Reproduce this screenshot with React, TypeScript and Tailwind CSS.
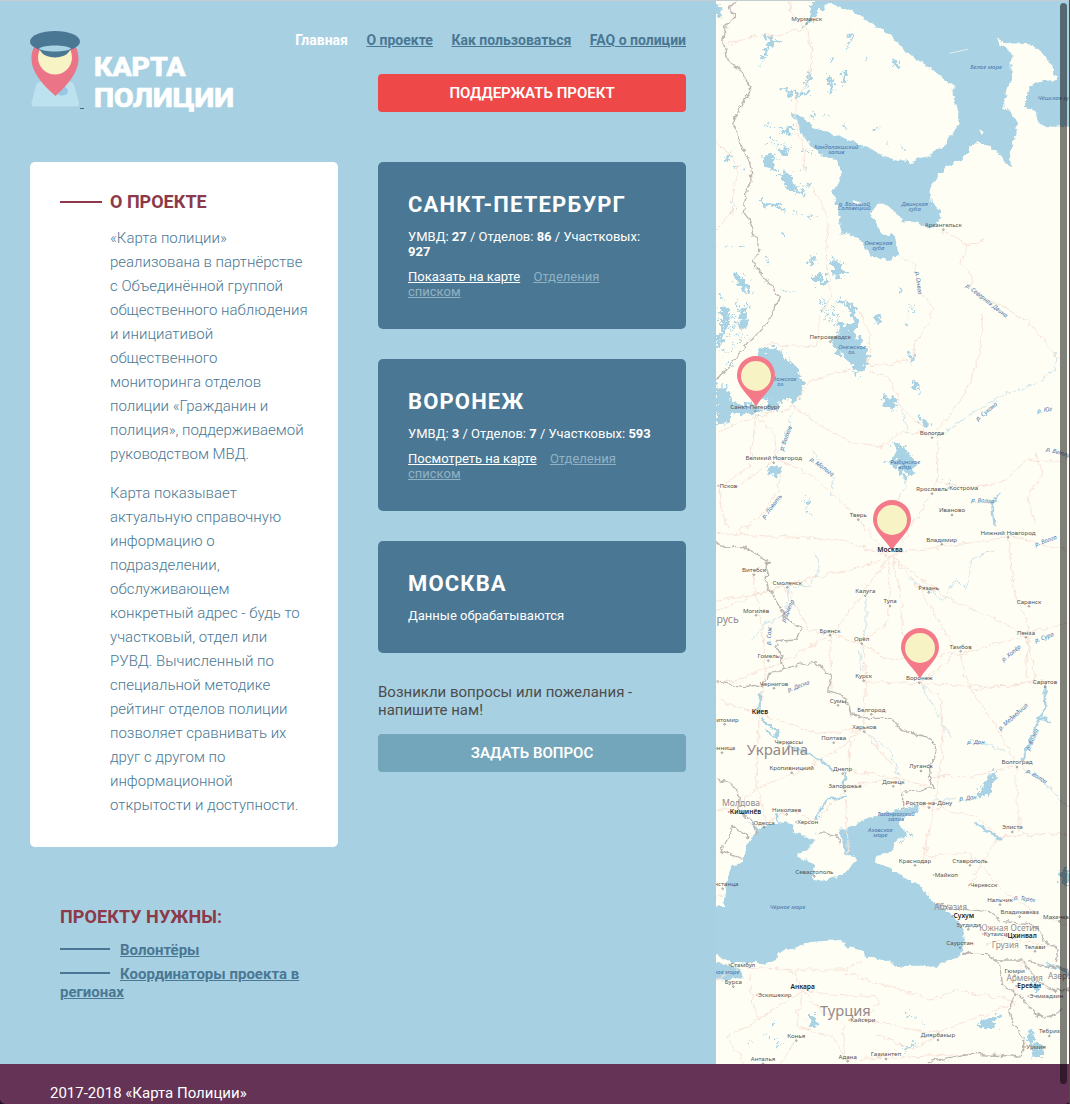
import React from "react";

const WATER = "#a9d3e4";

type Label = [string, number, number, number?, number?];

/* Map labels: text, centre x, baseline y, font size, rotation */
const cities: Label[] = [
  ["Мурманск", 272, 63], ["Архангельск", 682, 681], ["Петрозаводск", 343, 1017], ["Санкт-Петербург", 118, 1226],
  ["Вологда", 648, 1305], ["Великий Новгород", 173, 1380], ["◦Псков", 34, 1464], ["Ярославль", 648, 1473],
  ["◦Кострома", 740, 1469], ["Тверь", 427, 1551], ["Иваново", 708, 1537], ["Владимир", 677, 1625],
  ["Нижний Новгород", 876, 1604], ["Витебск", 114, 1716], ["Смоленск", 214, 1754], ["Калуга", 448, 1779],
  ["Рязань", 638, 1769], ["Тула", 522, 1810], ["Саранск", 939, 1811], ["Могилёв", 120, 1838],
  ["Брянск", 342, 1898], ["Орёл", 437, 1923], ["Тамбов", 734, 1946], ["Пенза", 930, 1904],
  ["Гомель", 157, 1974], ["Чернигов", 174, 2057], ["Курск", 443, 2034], ["Воронеж", 610, 2040],
  ["Саратов", 987, 2053], ["Сумы", 366, 2108], ["Белгород", 466, 2135], ["Житомир", 26, 2165],
  ["Харьков", 445, 2187], ["Полтава", 353, 2220], ["Черкассы", 218, 2232], ["Винница", 18, 2250],
  ["Кропивницкий", 227, 2310], ["Днепр", 380, 2313], ["Луганск", 615, 2305], ["Волгоград", 903, 2293],
  ["Донецк", 532, 2351], ["Запорожье", 387, 2365], ["Николаев", 212, 2435], ["Ростов-на-Дону", 639, 2415],
  ["Одесса", 144, 2474], ["◦Херсон", 272, 2473], ["Элиста", 889, 2488], ["Краснодар", 597, 2588],
  ["Ставрополь", 762, 2588], ["Севастополь", 295, 2621], ["Констанца", 20, 2658], ["◦Майкоп", 688, 2632],
  ["◦Черкесск", 800, 2662], ["Нальчик", 852, 2706], ["Владикавказ", 911, 2742], ["Махачкала", 1030, 2756],
  ["Зугдиди", 757, 2780], ["◦Кутаиси", 836, 2808], ["Саурстан", 732, 2835], ["Телави", 957, 2846],
  ["◦Стамбул", 77, 2902], ["Бурса", 52, 2952], ["Гюмри", 896, 2919], ["◦Эскишехир", 173, 2991],
  ["◦Эчмиадзин", 988, 2993], ["◦Кайсери", 437, 3067], ["Диярбакыр", 666, 3112], ["Конья", 241, 3114],
  ["Тебриз", 1000, 3100], ["◦Урмия", 957, 3148], ["Адана", 395, 3176], ["Газиантеп", 510, 3169],
  ["Анталья", 141, 3183],
];

const capitals: Label[] = [
  ["Москва", 522, 1657], ["Киев", 132, 2142], ["◦Кишинёв", 85, 2442], ["◦Сухум", 740, 2754],
  ["◦Цхинвал", 915, 2815], ["Анкара", 260, 2966], ["◦Ереван", 936, 2963],
];

const countries: Label[] = [
  ["русь", 35, 1870, 32], ["Украина", 184, 2264, 45], ["Молдова", 75, 2418, 26], ["Абхазия", 704, 2731, 25],
  ["Южная Осетия", 880, 2792, 25], ["Грузия", 868, 2843, 25], ["Армения", 926, 2943, 25], ["Азерб", 1032, 2938, 25],
  ["Турция", 388, 3047, 44],
];

const waters: Label[] = [
  ["Белое море", 810, 207], ["Чёшская губа", 1022, 300], ["Кандалакшский", 361, 446], ["залив", 361, 461],
  ["о. Большой", 415, 617], ["Соловецкий", 415, 631], ["Двинская", 596, 618], ["губа", 596, 633],
  ["Онежская", 487, 736], ["губа", 487, 750], ["Онежское", 408, 1048], ["оз.", 408, 1061],
  ["Ладожское", 195, 1142], ["оз.", 195, 1157], ["Рыбинское", 568, 1392], ["вдхр.", 568, 1406],
  ["Таганрогский", 540, 2449], ["залив", 540, 2463], ["Азовское", 493, 2496], ["море", 493, 2511],
  ["Чёрное море", 215, 2726], ["ное море", 32, 2921], ["р. Онега", 607, 854, 18, 83],
  ["р. Северная Двина", 812, 908, 18, 38], ["р. Сухона", 812, 1240, 18, -39], ["р. Юг", 986, 1236, 18, -8],
  ["р. Волхов", 210, 1320, 18, -70], ["р. Молога", 318, 1406, 18, 36], ["р. Ловать", 168, 1525, 18, -52],
  ["р. Волга", 800, 1508, 18, 3], ["р. Ветлуга", 1035, 1365, 18, 16], ["р. Волга", 990, 1628, 18, -20],
  ["р. Днепр", 216, 1838, 18, -66], ["р. Сож", 160, 1912, 18, -85], ["р. Сура", 985, 1918, 18, -20],
  ["р. Хопёр", 886, 1965, 18, -38], ["р. Десна", 248, 2064, 18, -20], ["р. Медведица", 892, 2156, 18, -42],
  ["р. Дон", 780, 2232, 18], ["р. Волга", 950, 2224, 18, -66], ["р. Волга", 962, 2335, 18, 32],
  ["р. Дон", 756, 2400, 18, -5], ["р. Терек", 926, 2702, 18, 8],
];

const roads = [
  "M30 135L110 108L200 104L270 82L290 150L280 230L240 300L240 370L262 440L268 520",
  "M270 82L225 40L220 0", "M0 425L40 460L62 500L55 570L48 640L0 690",
  "M270 545L325 615L336 680L330 790L350 880L310 950L298 1040L230 1038L130 1030",
  "M682 690L752 735L800 720M752 735L735 790L768 830L768 870L930 960L1030 1080",
  "M550 765L600 800L612 880L650 920L645 960L600 1020L590 1080L460 1100L460 1000L430 930",
  "M460 1115L520 1130L555 1220L640 1305L665 1300L665 1440L600 1560L530 1670",
  "M665 1290L750 1180L790 1060L800 950", "M120 1250L235 1220L310 1275L400 1325L500 1340L550 1300L640 1295",
  "M120 1250L180 1310L175 1370L290 1430L370 1500L420 1550L520 1670",
  "M120 1250L100 1400L30 1450L0 1460M10 1465L20 1540L35 1590", "M0 1300L120 1245M235 1210L290 1140L410 1105",
  "M170 1385L60 1460M190 1420L190 1470L130 1550L60 1600",
  "M0 1600L200 1610L380 1620L520 1670L400 1710L210 1750L0 1835", "M210 1755L110 1790L0 1800M110 1720L130 1840L150 1970L130 2140",
  "M520 1670L570 1655L820 1620L880 1610L1060 1650", "M665 1450L800 1460L870 1440L930 1380L1060 1385M960 1350L980 1420L935 1490L960 1570",
  "M522 1670L518 1860L440 1925L450 2040L440 2190L400 2210L400 2300L385 2350L398 2560",
  "M530 1670L555 1800L560 1900L610 2050L670 2090L685 2200L660 2390L640 2500L620 2590",
  "M535 1675L620 1780L720 1950L690 1990L610 2050M540 1680L690 1790L820 1850L920 1900L1060 1870",
  "M515 1680L440 1780L350 1900L190 1990L60 2040L0 2050", "M210 1760L280 1890L340 1900L345 2070",
  "M350 1900L430 1930L520 1980L610 1970L740 1960L840 1930L930 1910L960 2040L860 2060L440 2045",
  "M880 1610L890 1750L940 1890L930 2030M730 1960L760 2060L840 2180L900 2290L910 2490",
  "M770 2070L980 2045M0 2095L130 2145L250 2180L300 2200L440 2190", "M130 2145L120 2350L150 2470L220 2430L300 2465L385 2365L550 2330L560 2410L640 2420",
  "M440 2195L380 2240L240 2320L130 2360L60 2420L0 2430M400 2310L520 2330L640 2360M560 2330L440 2190",
  "M650 2330L770 2330L900 2295M640 2420L780 2450L850 2510L1060 2500M850 2510L800 2580L760 2660",
  "M640 2480L620 2570L760 2560L870 2680L1000 2760L1060 2780",
  "M0 2690L25 2685M0 2940L80 2900L230 2910L390 2910L440 2880",
  "M100 2920L110 3010L130 3060L30 3110L90 3190M130 3060L260 2970L290 3010L380 3070L390 3170",
  "M230 2910L260 2970L340 2985L480 2990L490 3010L440 3060L500 3070L650 3100L760 3060L900 3010",
  "M390 2920L650 3000L720 2970L890 3000M260 2980L240 3080L350 3110L390 3180L600 3170L800 3160",
  "M480 3100L590 3150L660 3110M240 3110L200 3190M890 3010L920 2880M810 2840L870 2810L900 2820L1000 2840",
];

const borders = [
  "M60 0L40 20L55 50L30 75L20 120L35 190L65 200L105 262L80 310L50 370L75 430L105 500L108 550L90 570L85 640L105 670L115 710L132 750L108 785L190 890L160 960L90 1040L0 1140",
  "M0 1625L30 1640L80 1640L120 1665L155 1680L150 1750L180 1800L205 1850L255 1885L240 1920L180 1925L190 1960L205 2005L160 2020L135 2055L80 2060L0 2045",
  "M205 2005L300 1985L345 2030L335 2075L390 2090L405 2145L460 2155L520 2155L560 2190L650 2220L660 2260L640 2305L650 2365L560 2375L560 2425",
  "M0 2335L50 2350L70 2390L65 2430L100 2455L125 2500M95 2510L50 2480L15 2555L80 2575",
  "M715 2725L820 2735L860 2765L930 2770L970 2785L980 2820L1030 2850L1020 2880",
  "M740 2860L810 2860L850 2890L860 2955L900 2980L880 3015L890 3070L920 3110L920 3170L890 3165L760 3160L640 3185",
  "M840 2880L920 2880L950 2930L1010 2975L1060 2970M905 2980L960 3045L1000 3050L1040 3030M935 2885L1060 2910",
  "M300 2500L360 2505L370 2530M660 2710L720 2725",
];

const rivers = [
  "M1018 1060L1018 1110L960 1150L870 1180L770 1240L665 1310", "M555 1220L575 1300M560 1420L570 1460L540 1500",
  "M235 1220L205 1320L175 1380M120 2480L90 2470M290 1350L350 1440L350 1490", "M450 1780L450 1880L430 1950L440 2010",
  "M300 1660L310 1710L280 1760L220 1760L210 1840L150 1870L110 1920", "M580 1740L620 1760L680 1800L720 1740L750 1770L770 1680L830 1650",
  "M450 2200L520 2250L550 2320", "M760 2220L860 2250M620 2060L670 2150L700 2210", "M650 2400L740 2395",
  "M925 2310L980 2340L1030 2400L1062 2420",
];

const wideRivers = [
  "M132 2080L130 2135", "M140 2160L180 2190L185 2212L150 2190", "M215 2235L300 2270L350 2310M390 2320L385 2360",
  "M300 2455L328 2400L390 2390", "M850 1480L828 1512L835 1575", "M985 2055L988 2130L970 2155L1005 2166M970 2160L915 2280",
  "M780 2470L850 2515", "M990 2890L1062 2920", "M180 2440L190 2470L230 2475M105 2460L130 2500",
];

const lakes = [
  "M290 0L335 0L325 15L296 55L255 90L280 45Z",
  "M145 112L175 115L200 120L180 130L160 150L125 205L155 135Z", "M405 90L412 100L400 140L390 160L398 120Z",
  "M335 230L350 232L356 270L345 282Z", "M385 212L394 222L388 255L380 245Z", "M275 220L288 206L280 260L268 263Z",
  "M195 260L230 275L285 275L280 288L250 285L225 298L215 285Z", "M530 180L552 188L550 205L530 200Z",
  "M465 390L485 384L480 394Z", "M0 10L22 15L15 50L0 60Z", "M150 460L170 465L178 512L150 500L138 485Z",
  "M190 385L230 380L226 403L200 400Z", "M200 445L216 450L212 470L195 460Z", "M20 480L50 450L35 490Z",
  "M185 515L225 520L232 555L270 580L230 575L210 560Z", "M122 605L190 608L212 642L180 620L150 620Z",
  "M340 775L378 790L380 810L405 825L360 830L345 800Z", "M290 825L325 825L330 850L295 853Z",
  "M50 820L90 835L105 870L90 880L70 860Z", "M280 770L300 765L295 790L275 795Z", "M15 920L40 930L35 990L15 1020Z",
  "M0 1000L20 1000L10 1040L0 1050Z",
  "M75 930L95 910L90 980L68 1000Z",
  "M355 895L410 915L426 955L420 1000L460 1070L440 1115L425 1125L400 1090L355 1050L345 1010L375 1000L365 960L385 970L395 985L410 960L395 930Z",
  "M480 943L495 950L490 975L478 970Z", "M580 1063L595 1055L590 1095L582 1090Z", "M590 1143L607 1145L608 1180L595 1165Z",
  "M500 1190L525 1188L545 1196L543 1224L515 1228L500 1212Z",
  "M605 1245L640 1275L635 1285L610 1262Z", "M528 1325L565 1345L600 1390L595 1420L565 1430L540 1400L510 1385L540 1370Z",
  "M155 1402L175 1395L200 1405L180 1430L160 1425Z",
  "M120 1060L150 1040L195 1052L215 1080L245 1105L262 1150L255 1185L235 1210L225 1198L195 1200L190 1235L150 1232L155 1195L120 1190Z",
  "M0 1155L30 1160L50 1210L120 1215L145 1240L50 1240L35 1265L0 1280Z",
  "M775 2390L800 2360L820 2325L845 2310L825 2375L790 2395Z",
  "M275 3050L300 3045L305 3080L285 3075Z", "M785 3065L850 3040L835 3085L800 3085Z", "M560 3145L600 3125L575 3155Z",
  "M148 3095L157 3110L150 3120ZM180 3115L195 3135L185 3140ZM165 3070L188 3075L170 3080Z",
  "M935 3095L960 3100L955 3130L985 3145L975 3175L950 3170L945 3130L930 3120Z",
  "M940 2945L980 2950L975 2970L950 2965Z",
  "M1062 2605L1025 2615L1030 2640L1062 2660Z",
];

function Labels({ items, className, size }: { items: Label[]; className: string; size: number }) {
  return (
    <g className={className} textAnchor="middle">
      {items.map(([text, x, y, s, r], i) => (
        <text key={i} x={x} y={y} fontSize={s ?? size} transform={r ? `rotate(${r} ${x} ${y - 5})` : undefined}>
          {text}
        </text>
      ))}
    </g>
  );
}

function Pin({ x, y }: { x: number; y: number }) {
  return (
    <g transform={`translate(${x} ${y})`}>
      <path d="M0 153C-12 124-57 96-57 57A57 57 0 0 1 57 57C57 96 12 124 0 153Z" fill="#f47a8a" />
      <circle cy="60" r="45" fill="#f8f3c5" />
    </g>
  );
}

function MapView() {
  return (
    <svg className="block h-[1064px] w-[354px] bg-[#fffef4]" viewBox="0 0 1062 3192" fontFamily="'Noto Sans', sans-serif">
      <defs>
        {/* Roughens coastlines, rivers and borders */}
        <filter id="coast" filterUnits="userSpaceOnUse" x="-40" y="-40" width="1142" height="3272">
          <feTurbulence type="fractalNoise" baseFrequency="0.045" numOctaves="3" seed="4" />
          <feDisplacementMap in="SourceGraphic" scale="22" xChannelSelector="R" yChannelSelector="G" />
        </filter>
        <filter id="lake" filterUnits="userSpaceOnUse" x="-40" y="-40" width="1142" height="3272">
          <feTurbulence type="fractalNoise" baseFrequency="0.07" numOctaves="3" seed="9" />
          <feDisplacementMap in="SourceGraphic" scale="42" xChannelSelector="R" yChannelSelector="G" />
        </filter>
      </defs>
      <g fill={WATER} filter="url(#coast)">
        <path d="M300 18L340 -30L1092 -30L1092 374L990 382L965 365L960 335L930 318L930 280L950 250L1023 238L1010 195L965 145L935 132L875 130L834 113L886 160L888 230L865 300L865 328L890 340L903 375L895 420L880 470L882 505L850 465L825 438L800 435L778 423L735 480L690 500L655 543L640 570L645 610L668 630L677 655L640 685L590 662L555 665L545 645L500 608L480 608L462 640L480 670L500 705L540 705L550 762L515 780L460 765L430 715L375 700L370 640L350 580L365 545L378 520L360 480L310 465L275 425L225 340L255 345L300 390L340 395L350 415L375 412L480 455L530 480L580 487L640 470L690 430L725 380L728 325L715 310L712 260L645 205L575 165L530 110L460 65L410 35L345 15Z" />
        <path d="M-30 2850L40 2885L150 2890L180 2875L200 2855L290 2825L375 2820L400 2845L440 2850L450 2878L480 2873L560 2900L660 2900L735 2865L750 2820L745 2790L712 2750L650 2700L600 2650L520 2605L475 2580L475 2545L430 2548L385 2560L425 2580L380 2625L320 2642L290 2635L300 2600L242 2565L275 2545L300 2520L235 2500L230 2475L145 2475L100 2520L85 2565L82 2585L45 2600L30 2650L22 2720L-30 2725Z" />
        <path d="M375 2515L370 2490L415 2475L500 2440L540 2430L610 2415L610 2430L580 2445L545 2465L560 2490L575 2510L545 2515L520 2560L460 2570L390 2560Z" />
        <path d="M-30 2890L60 2895L85 2935L-30 2940Z" />
      </g>
      <g fill={WATER} filter="url(#lake)">
        {lakes.map((d, i) => <path key={i} d={d} />)}
        <path fill="none" stroke={WATER} strokeWidth="5" strokeDasharray="14 12 6 18" d="M150 370L210 390L160 430L230 440L150 480M50 500L95 505M190 695L215 700M20 740L90 735M150 775L160 790M200 870L240 885M310 900L330 960M350 910L370 970M315 905L375 1000M325 900L385 990M0 930L80 960L20 1000L90 1010L0 1080M10 880L60 990M60 910L100 1000M340 180L355 182M450 175L448 181M290 340L300 350M325 340L335 360M385 370L393 388M510 420L515 440M555 440L565 445M550 865L560 875M590 920L560 990M40 640L60 600M50 1090L10 1110M250 1510L280 1490L270 1540L300 1550M570 3040L630 3070M690 1450L705 1445M95 3125L110 3120M570 2505L590 2500L555 2530M260 450L300 460M265 500L290 530M220 550L290 560M230 640L300 650" />
      </g>
      <path d="M700 160L755 148" stroke="#dfeef0" strokeWidth="3" fill="none" />
      <path d="M790 388L803 396L797 405ZM410 600L440 610L415 616Z" fill="#fffef4" />
      <g fill="none" strokeLinejoin="round" strokeLinecap="round" filter="url(#coast)">
        <g stroke="#f7e2d9" strokeWidth="3">{roads.map((d, i) => <path key={i} d={d} />)}</g>
        <g stroke="#cfe4ec" strokeWidth="3">{rivers.map((d, i) => <path key={i} d={d} />)}</g>
        <g stroke={WATER} strokeWidth="7">{wideRivers.map((d, i) => <path key={i} d={d} />)}</g>
        <g stroke="#bcb5b2" strokeWidth="4">{borders.map((d, i) => <path key={i} d={d} />)}</g>
      </g>
      <g fill="none" stroke="#777" strokeWidth="2">
        {cities.filter(([t]) => t[0] !== "◦").map(([t, x, y]) => <circle key={t} cx={x} cy={y + 8} r="2.5" />)}
      </g>
      <Labels items={waters} size={18} className="fill-[#4a74ad] italic" />
      <Labels items={cities} size={18.5} className="fill-[#555555]" />
      <Labels items={countries} size={25} className="fill-[#938a8b]" />
      <Pin x={120} y={1068} />
      <Pin x={528} y={1500} />
      <Pin x={612} y={1884} />
      <Labels items={capitals} size={20} className="fill-[#222222] font-semibold" />
    </svg>
  );
}

function Logo() {
  return (
    <svg width="210" height="84" viewBox="0 0 210 84" aria-label="Карта полиции">
      <path d="M9 52H41Q43 52 44 55L49 73Q49.500 76.500 46 76.500H4.500Q1 76.500 1.500 73L6 56Q7 52 9 52Z" fill="#bce2f0" />
      <ellipse cx="32" cy="61" rx="6" ry="4.500" fill="#95c8e4" />
      <path d="M25.500 66C19 60 1.500 45 1.500 29C1.500 12 13 8 25 8S48.500 12 48.500 29C48.500 45 32 60 25.500 66Z" fill="#eb7487" />
      <circle cx="25" cy="27.500" r="17" fill="#f8f3c5" />
      <path d="M9 17H41C39 31 11 31 9 17Z" fill="#4a7793" />
      <ellipse cx="25" cy="11.500" rx="25" ry="10.500" fill="#4a7793" />
      <path d="M9 18.500C13 14.500 37 14.500 41 18.500C38 22.500 12 22.500 9 18.500Z" fill="#a9d3e4" />
      <path d="M50 78.500H54" stroke="#4a6577" strokeWidth="1" />
      <g className="fill-white stroke-white font-extrabold" strokeWidth="0.7" fontFamily="Roboto, sans-serif" fontSize="25.500">
        <text x="64" y="46" textLength="91.500" lengthAdjust="spacingAndGlyphs">КАРТА</text>
        <text x="64" y="77" textLength="140" lengthAdjust="spacingAndGlyphs">ПОЛИЦИИ</text>
      </g>
    </svg>
  );
}

function CityCard({ name, height, children }: { name: string; height: string; children: React.ReactNode }) {
  return (
    <section className={`mb-[30px] rounded-[5px] bg-[#4a7793] px-[30px] pt-[30px] text-[13px] leading-[15px] text-white ${height}`}>
      <h2 className="mb-[12px] text-[22px] leading-[25px] font-bold tracking-[1.150px] whitespace-nowrap">{name}</h2>
      {children}
    </section>
  );
}

function CityLinks({ first }: { first: string }) {
  return (
    <p className="mt-[10px]">
      <a href="#" className="mr-[10px] underline">{first}</a>{" "}
      <a href="#" className="text-[#91b2c5] underline">Отделения<br />списком</a>
    </p>
  );
}

export default function App() {
  return (
    <div className="relative h-[1104px] w-[1070px] overflow-hidden bg-[#a7d1e2] font-[Roboto,sans-serif]">
      <div className="flex h-[1064px]">
        <div className="w-[716px] px-[30px]">
          <header className="flex h-[162px] justify-between pt-[30px]">
            <Logo />
            <div className="flex flex-col items-end">
              <nav className="flex h-[44px] gap-[18.500px] pt-[2px] text-[14px] leading-[17px] font-bold whitespace-nowrap text-[#4a7793]">
                <a href="#" className="text-white">Главная</a>
                <a href="#" className="underline">О проекте</a>
                <a href="#" className="underline">Как пользоваться</a>
                <a href="#" className="underline">FAQ о полиции</a>
              </nav>
              <a href="#" className="flex h-[38px] w-[308px] items-center justify-center rounded-[4px] bg-[#ee4848] text-[15px] font-semibold text-white">
                ПОДДЕРЖАТЬ ПРОЕКТ
              </a>
            </div>
          </header>
          <div className="flex gap-[40px]">
            <div className="w-[308px]">
              <section className="h-[685px] rounded-[5px] bg-white px-[30px] pt-[29px] text-[#4a7793]">
                <div className="mb-[14px] flex items-center gap-[8px]">
                  <span className="h-[2px] w-[42px] bg-[#8c3949]" />
                  <h2 className="text-[18px] leading-[21px] font-bold text-[#8c3949]">О ПРОЕКТЕ</h2>
                </div>
                <div className="-mr-[10px] flex flex-col gap-[15px] pl-[50px] text-[15px] leading-[24px] font-light">
                  <p>«Карта полиции»<br />реализована в партнёрстве<br />с Объединённой группой<br />общественного наблюдения<br />и инициативой<br />общественного<br />мониторинга отделов<br />полиции «Гражданин и<br />полиция», поддерживаемой<br />руководством МВД.</p>
                  <p>Карта показывает<br />актуальную справочную<br />информацию о<br />подразделении,<br />обслуживающем<br />конкретный адрес - будь то<br />участковый, отдел или<br />РУВД. Вычисленный по<br />специальной методике<br />рейтинг отделов полиции<br />позволяет сравнивать их<br />друг с другом по<br />информационной<br />открытости и доступности.</p>
                </div>
              </section>
              <section className="mt-[59px] px-[30px] text-[15px] leading-[18px] font-bold text-[#4a7793]">
                <h2 className="mb-[14px] text-[18px] leading-[21px] tracking-[0.080px] text-[#8c3949]">ПРОЕКТУ НУЖНЫ:</h2>
                <p className="mb-[6px]">
                  <span className="mr-[10px] inline-block h-[2px] w-[50px] bg-[#4a7793] align-[5px]" />
                  <a href="#" className="underline">Волонтёры</a>
                </p>
                <p>
                  <span className="mr-[10px] inline-block h-[2px] w-[50px] bg-[#4a7793] align-[5px]" />
                  <a href="#" className="underline">Координаторы проекта в<br />регионах</a>
                </p>
              </section>
            </div>
            <div className="w-[308px]">
              <CityCard name="САНКТ-ПЕТЕРБУРГ" height="h-[167px]">
                <p>УМВД: <b>27</b> / Отделов: <b>86</b> / Участковых:<br /><b>927</b></p>
                <CityLinks first="Показать на карте" />
              </CityCard>
              <CityCard name="ВОРОНЕЖ" height="h-[152px]">
                <p>УМВД: <b>3</b> / Отделов: <b>7</b> / Участковых: <b>593</b></p>
                <CityLinks first="Посмотреть на карте" />
              </CityCard>
              <CityCard name="МОСКВА" height="h-[112px]">
                <p>Данные обрабатываются</p>
              </CityCard>
              <p className="mb-[15px] text-[15px] leading-[18px] text-[#4d4d4d]">Возникли вопросы или пожелания -<br />напишите нам!</p>
              <a href="#" className="flex h-[38px] items-center justify-center rounded-[4px] bg-[#73a5bb] text-[15px] font-semibold text-white">ЗАДАТЬ ВОПРОС</a>
            </div>
          </div>
        </div>
        <MapView />
      </div>
      <div className="bg-[#1d1220]">
        <footer className="h-[40px] rounded-b-[5px] bg-[#643356] pt-[20px] pl-[50px] text-[15px] leading-[18px] text-white">2017-2018 «Карта Полиции»</footer>
      </div>
      <div className="absolute inset-x-0 top-0 h-px bg-[#c4cdd1]" />
      <div className="absolute top-[3px] left-[1060px] h-[1081px] w-[7px] rounded-full bg-black/50" />
      <div className="absolute top-0 right-0 h-full w-px bg-[#58474a]" />
    </div>
  );
}
